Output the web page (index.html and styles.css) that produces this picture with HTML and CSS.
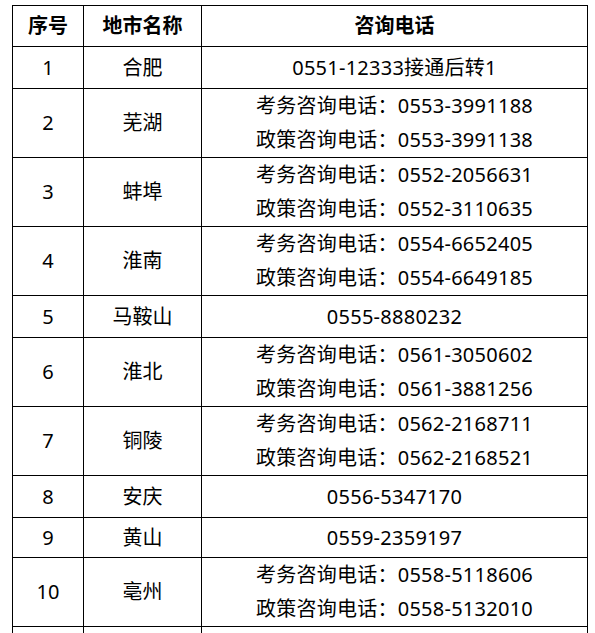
FILE: index.html
```html
<!DOCTYPE html>
<html lang="zh-CN">
<head>
<meta charset="utf-8">
<link rel="stylesheet" href="styles.css">
</head>
<body>
<table class="tbl">
  <colgroup>
    <col class="c1"><col class="c2"><col class="c3">
  </colgroup>
  <thead>
    <tr class="r-head"><th>序号</th><th>地市名称</th><th>咨询电话</th></tr>
  </thead>
  <tbody>
    <tr class="r1"><td>1</td><td>合肥</td><td class="tel">0551-12333接通后转1</td></tr>
    <tr class="r2"><td>2</td><td>芜湖</td><td class="tel"><div class="ln">考务咨询电话：0553-3991188</div><div class="ln">政策咨询电话：0553-3991138</div></td></tr>
    <tr class="r2"><td>3</td><td>蚌埠</td><td class="tel"><div class="ln">考务咨询电话：0552-2056631</div><div class="ln">政策咨询电话：0552-3110635</div></td></tr>
    <tr class="r2"><td>4</td><td>淮南</td><td class="tel"><div class="ln">考务咨询电话：0554-6652405</div><div class="ln">政策咨询电话：0554-6649185</div></td></tr>
    <tr class="r1"><td>5</td><td>马鞍山</td><td class="tel">0555-8880232</td></tr>
    <tr class="r2"><td>6</td><td>淮北</td><td class="tel"><div class="ln">考务咨询电话：0561-3050602</div><div class="ln">政策咨询电话：0561-3881256</div></td></tr>
    <tr class="r2"><td>7</td><td>铜陵</td><td class="tel"><div class="ln">考务咨询电话：0562-2168711</div><div class="ln">政策咨询电话：0562-2168521</div></td></tr>
    <tr class="r1"><td>8</td><td>安庆</td><td class="tel">0556-5347170</td></tr>
    <tr class="r1b"><td>9</td><td>黄山</td><td class="tel">0559-2359197</td></tr>
    <tr class="r2"><td>10</td><td>亳州</td><td class="tel"><div class="ln">考务咨询电话：0558-5118606</div><div class="ln">政策咨询电话：0558-5132010</div></td></tr>
    <tr class="r2"><td></td><td></td><td></td></tr>
  </tbody>
</table>
</body>
</html>
```

FILE: styles.css
```css
html, body {
  margin: 0;
  padding: 0;
  background: #ffffff;
}
body {
  padding: 5px 0 0 12px;
  font-family: "Noto Sans", "Noto Sans CJK SC", sans-serif;
  font-size: 20px;
  color: #000000;
}
.tbl {
  border-collapse: collapse;
  table-layout: fixed;
  width: 576px;
}
.c1 { width: 71px; }
.c2 { width: 118px; }
.tbl th, .tbl td {
  border: 1px solid #000000;
  padding: 0;
  text-align: center;
  vertical-align: middle;
  line-height: 34px;
}
.tbl th {
  font-weight: bold;
}
.tel { letter-spacing: 0.25px; }
.r-head th { height: 40px; }
.r1 td { height: 41px; }
.r1b td { height: 39px; }
.r2 td { height: 68px; }
.ln { line-height: 34px; white-space: nowrap; }
```
